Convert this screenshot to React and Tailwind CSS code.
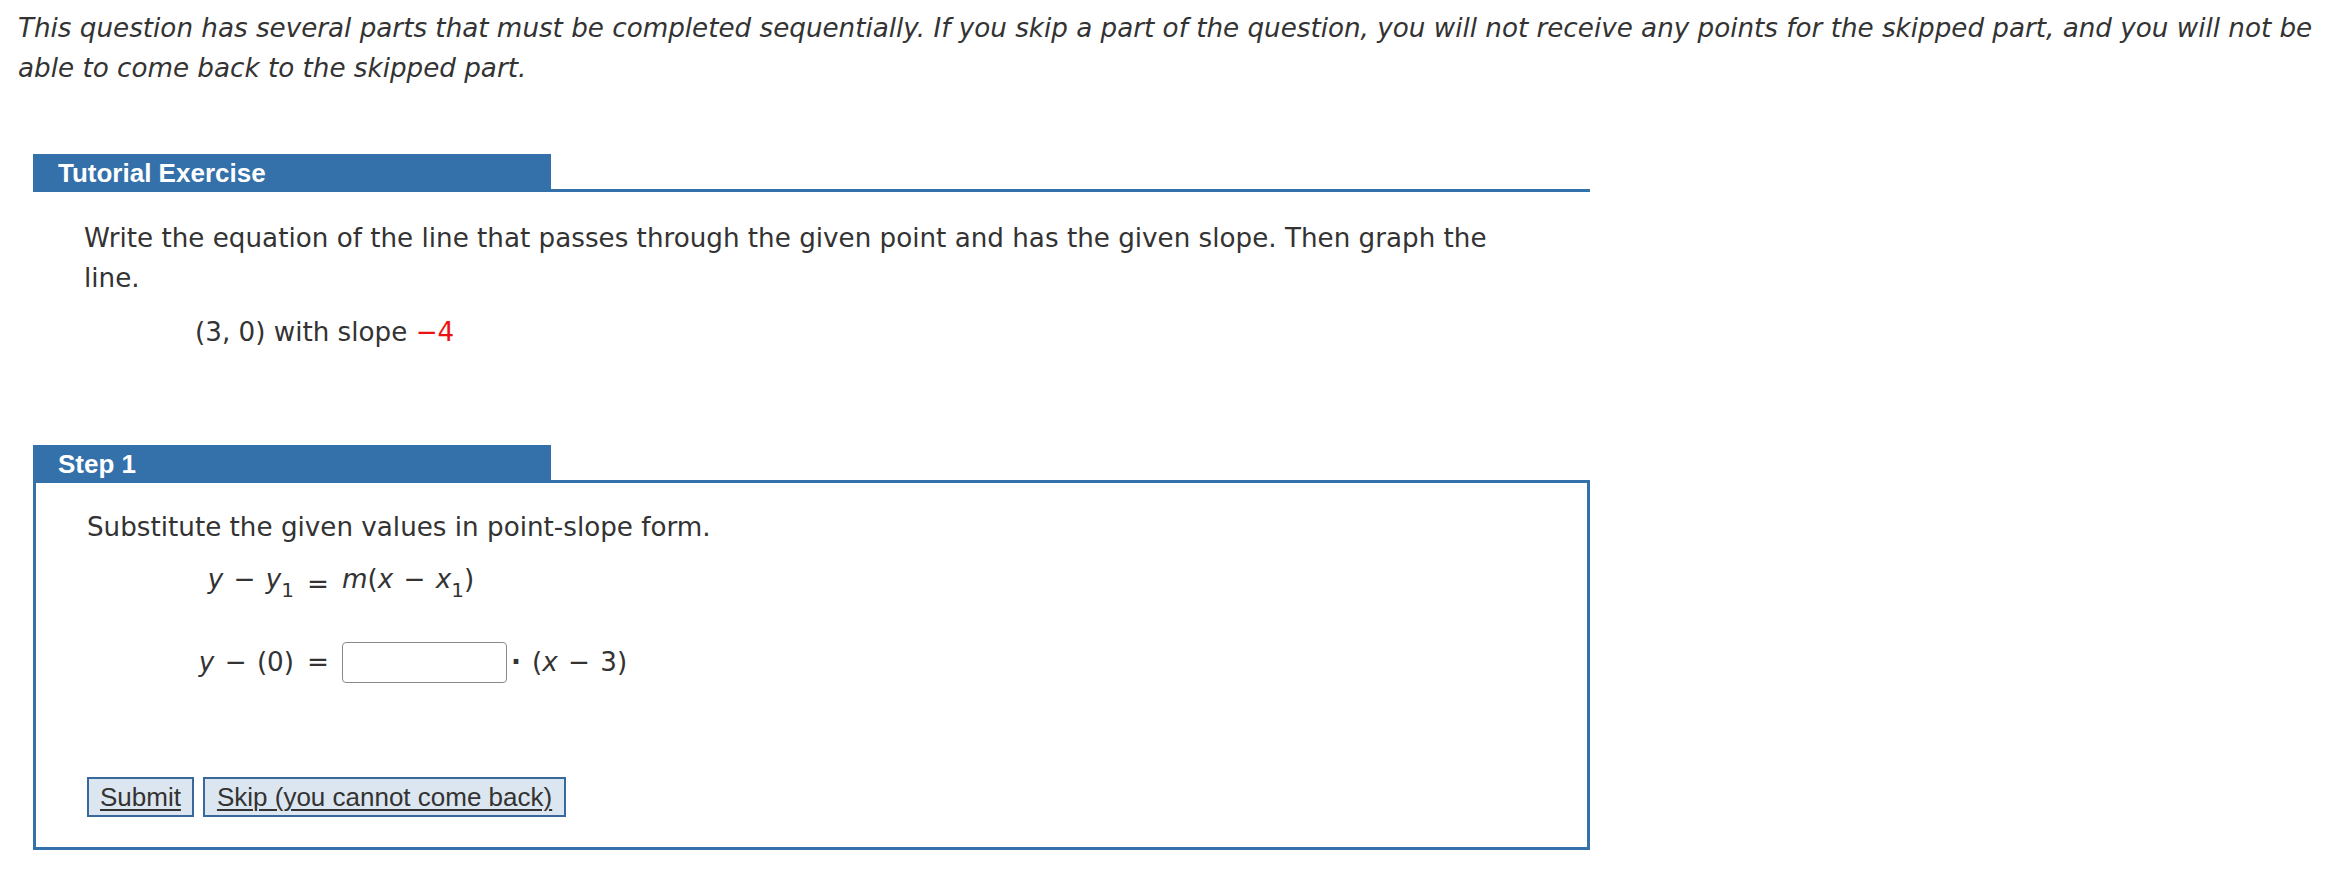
import React from "react";

function Header({ title }) {
  return (
    <div className="flex items-end h-[38px]">
      <div className="w-[518px] h-full bg-[#3470a9] pl-[25px] flex items-center text-white font-bold text-[26px] leading-none font-['Liberation_Sans',Arial,sans-serif]">
        {title}
      </div>
      <div className="flex-1 h-[3px] bg-[#3470a9]" />
    </div>
  );
}

function V({ children }) {
  return <span className="italic">{children}</span>;
}

function Sub({ children }) {
  return <span className="text-[20px] align-[-9px]">{children}</span>;
}

function Minus() {
  return <span className="mx-[2px]">−</span>;
}

export default function App() {
  return (
    <div className="min-h-[886px] bg-white text-[#333] font-['DejaVu_Sans',Verdana,sans-serif]">
      <p className="pt-[8px] pl-[18px] text-[26.2px] leading-[40px] italic">
        <span className="block whitespace-nowrap">
          This question has several parts that must be completed sequentially. If you skip a part of the question, you will not receive any points for the skipped part, and you will not be
        </span>
        <span className="block whitespace-nowrap">able to come back to the skipped part.</span>
      </p>

      <section className="ml-[33px] w-[1557px] mt-[66px]">
        <Header title="Tutorial Exercise" />
        <div className="pl-[51px] pt-[26px] text-[26.2px] leading-[40px]">
          <span className="block whitespace-nowrap">
            Write the equation of the line that passes through the given point and has the given slope. Then graph the
          </span>
          <span className="block">line.</span>
          <div className="mt-[14px] pl-[111px] whitespace-nowrap">
            (3, 0) with slope <span className="text-[#ee1111]">−4</span>
          </div>
        </div>
      </section>

      <section className="ml-[33px] w-[1557px] mt-[93px]">
        <Header title="Step 1" />
        <div className="border-[3px] border-t-0 border-[#3470a9] h-[367px] pl-[51px] pt-[24px] text-[26.2px] leading-[40px]">
          <div className="whitespace-nowrap">Substitute the given values in point-slope form.</div>

          <div className="mt-[15px] ml-[93px] flex flex-col">
            <div className="flex items-center h-[44px] whitespace-nowrap">
              <div className="w-[114px] text-right">
                <V>y</V> <Minus /> <V>y</V>
                <Sub>1</Sub>
              </div>
              <div className="w-[48px] text-center">=</div>
              <div>
                <V>m</V>(<V>x</V> <Minus /> <V>x</V>
                <Sub>1</Sub>)
              </div>
            </div>
            <div className="flex items-center h-[44px] mt-[34px] whitespace-nowrap">
              <div className="w-[114px] text-right">
                <V>y</V> <Minus /> (0)
              </div>
              <div className="w-[48px] text-center">=</div>
              <div className="flex items-center">
                <input
                  type="text"
                  aria-label="slope"
                  className="w-[165px] h-[41px] border border-[#8a8a8a] rounded-[4px] bg-white outline-none"
                />
                <span className="ml-[4px] font-bold">·</span>
                <span className="ml-[11px]">
                  (<V>x</V> <Minus /> 3)
                </span>
              </div>
            </div>
          </div>

          <div className="mt-[93px] flex gap-[9px] font-['Liberation_Sans',Arial,sans-serif] text-[26px] leading-none text-[#333]">
            <button className="h-[40px] px-[11px] border-2 border-[#39699c] bg-[#dce6f0] underline underline-offset-[3px] decoration-[2px]">
              Submit
            </button>
            <button className="h-[40px] px-[12px] border-2 border-[#39699c] bg-[#dce6f0] underline underline-offset-[3px] decoration-[2px]">
              Skip (you cannot come back)
            </button>
          </div>
        </div>
      </section>
    </div>
  );
}
